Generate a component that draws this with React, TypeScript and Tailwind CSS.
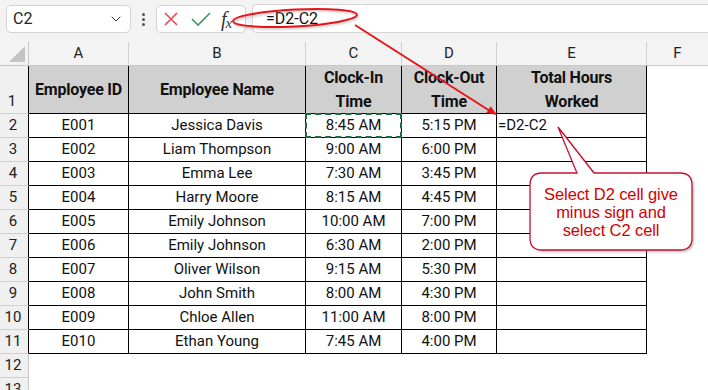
import { ChevronDown } from "lucide-react";

const rows: string[][] = [
  ["E001", "Jessica Davis", "8:45 AM", "5:15 PM"],
  ["E002", "Liam Thompson", "9:00 AM", "6:00 PM"],
  ["E003", "Emma Lee", "7:30 AM", "3:45 PM"],
  ["E004", "Harry Moore", "8:15 AM", "4:45 PM"],
  ["E005", "Emily Johnson", "10:00 AM", "7:00 PM"],
  ["E006", "Emily Johnson", "6:30 AM", "2:00 PM"],
  ["E007", "Oliver Wilson", "9:15 AM", "5:30 PM"],
  ["E008", "John Smith", "8:00 AM", "4:30 PM"],
  ["E009", "Chloe Allen", "11:00 AM", "8:00 PM"],
  ["E010", "Ethan Young", "7:45 AM", "4:00 PM"],
];

const cols = ["A", "B", "C", "D", "E", "F"];
const widths = ["w-[100px]", "w-[177px]", "w-[96px]", "w-[95px]", "w-[150px]", "flex-1"];
const headers: string[][] = [
  ["Employee ID"],
  ["Employee Name"],
  ["Clock-In", "Time"],
  ["Clock-Out", "Time"],
  ["Total Hours", "Worked"],
];

export default function App() {
  return (
    <div className="relative w-[708px] h-[390px] overflow-hidden bg-white font-['Roboto',sans-serif] text-[#111]">
      {/* Toolbar */}
      <div className="h-[41px] bg-[#f3f3f3] flex items-start pt-[5px] pl-[6px]">
        <div className="w-[125px] h-[28px] rounded-[5px] border border-[#d4d4d4] bg-white flex items-center justify-between pl-[6px] pr-[6px]">
          <span className="text-[16px] text-[#222]">C2</span>
          <ChevronDown size={16} strokeWidth={1.5} className="text-[#333]" />
        </div>
        <div className="ml-[11px] mt-[8px] flex flex-col gap-[2px]">
          <div className="w-[3px] h-[3px] rounded-full bg-[#555]" />
          <div className="w-[3px] h-[3px] rounded-full bg-[#555]" />
          <div className="w-[3px] h-[3px] rounded-full bg-[#555]" />
        </div>
        <div className="ml-[11px] w-[90px] h-[28px] rounded-[5px] border border-[#d4d4d4] bg-white flex items-center pl-[6px]">
          <svg width="16" height="16" viewBox="0 0 16 16">
            <path d="M2 2 L14 14 M14 2 L2 14" stroke="#e5484d" strokeWidth="1.6" fill="none" />
          </svg>
          <svg width="22" height="16" viewBox="0 0 22 16" className="ml-[11px]">
            <path d="M2 8 L8 14 L20 2" stroke="#3d9a5f" strokeWidth="1.6" fill="none" />
          </svg>
          <span className="ml-[9px] font-['Liberation_Serif',serif] italic text-[20px] leading-none text-[#333]">
            f<span className="text-[15px] relative top-[2px] -ml-[1px]">x</span>
          </span>
        </div>
        <div className="ml-[6px] flex-1 h-[29px] -mt-[1px] rounded-l-[5px] border border-r-0 border-[#d4d4d4] bg-white flex items-center pl-[13px]">
          <span className="text-[16px] text-[#111]">=D2-C2</span>
        </div>
      </div>

      {/* Column headers */}
      <div className="flex h-[25px] bg-[#f3f3f3] border-b border-[#c8c8c8]">
        <div className="w-[29px] border-r border-[#c8c8c8] flex items-end justify-end pr-[3px] pb-[3px]">
          <svg width="16" height="16" viewBox="0 0 16 16">
            <polygon points="16,0 16,16 0,16" fill="#c4c4c4" />
          </svg>
        </div>
        {cols.map((c, i) => (
          <div
            key={c}
            className={`${widths[i]} ${i < 5 ? "border-r border-[#d0d0d0]" : ""} flex items-center justify-center text-[15px] text-[#222] mt-[1px]`}
          >
            {c}
          </div>
        ))}
      </div>

      {/* Row 1 header */}
      <div className="flex h-[48px]">
        <div className="w-[29px] bg-[#f0f0f0] border-r border-b border-r-black border-b-[#d0d0d0] flex items-end justify-center pb-[1px] pr-[4px] text-[15px] text-[#222]">
          1
        </div>
        {headers.map((h, i) => (
          <div
            key={i}
            className={`${widths[i]} bg-[#d0d0d0] border-r border-b border-black flex flex-col items-center justify-center text-center font-bold text-[16px] leading-[24px] whitespace-nowrap tracking-[-0.2px]`}
          >
            {h.map((l) => (
              <span key={l}>{l}</span>
            ))}
          </div>
        ))}
        <div className="flex-1" />
      </div>

      {/* Data rows */}
      {rows.map((r, ri) => (
        <div key={ri} className="flex h-[24px]">
          <div className="w-[29px] bg-[#f0f0f0] border-r border-b border-r-black border-b-[#d0d0d0] flex items-center justify-center pr-[2px] text-[15px] text-[#222]">
            {ri + 2}
          </div>
          <div className="w-[100px] border-r border-b border-black flex items-center justify-center text-[15px]">{r[0]}</div>
          <div className="w-[177px] border-r border-b border-black flex items-center justify-center text-[15px]">{r[1]}</div>
          <div className="relative w-[96px] border-r border-b border-black flex items-center justify-center text-[15px]">
            {r[2]}
            {ri === 0 && (
              <div className="absolute -left-[1px] -top-[1px] w-[97px] h-[25px] border-2 border-dashed border-[#1e6b40]" />
            )}
          </div>
          <div className="w-[95px] border-r border-b border-black flex items-center justify-center text-[15px]">{r[3]}</div>
          <div className="w-[150px] border-r border-b border-black flex items-center pl-[1px] text-[15px]">
            {ri === 0 ? "=D2-C2" : ""}
          </div>
          <div className="flex-1" />
        </div>
      ))}

      {/* Empty rows */}
      {[12, 13].map((n) => (
        <div key={n} className="flex h-[24px]">
          <div className="w-[29px] bg-[#f0f0f0] border-r border-b border-[#c8c8c8] border-b-[#d0d0d0] flex items-center justify-center pr-[2px] text-[15px] text-[#222]">
            {n}
          </div>
          <div className="flex-1" />
        </div>
      ))}

      {/* Annotations overlay */}
      <svg className="absolute left-0 top-0 pointer-events-none" width="708" height="390" viewBox="0 0 708 390">
        <defs>
          <filter id="sh" x="-10%" y="-10%" width="130%" height="130%">
            <feGaussianBlur stdDeviation="1.2" />
          </filter>
        </defs>
        <ellipse cx="296" cy="19.5" rx="62" ry="8.5" transform="rotate(-3 296 19.5)" fill="none" stroke="#888" strokeWidth="2" opacity="0.5" filter="url(#sh)" />
        <ellipse cx="295" cy="18" rx="62" ry="8.5" transform="rotate(-3 295 18)" fill="none" stroke="#e8141b" strokeWidth="2" />
        <line x1="355" y1="25" x2="490" y2="111" stroke="#e8141b" strokeWidth="2" />
        <polygon points="497,115 486.4,113 490.7,106.2" fill="#e8141b" />
        <path
          d="M 544 175 L 579 175 L 560 129 L 596 175 L 682 175 Q 694 175 694 187 L 694 240 Q 694 252 682 252 L 544 252 Q 532 252 532 240 L 532 187 Q 532 175 544 175 Z"
          fill="#999"
          opacity="0.6"
          filter="url(#sh)"
        />
        <path
          d="M 542 173 L 577 173 L 558 127 L 594 173 L 680 173 Q 692 173 692 185 L 692 238 Q 692 250 680 250 L 542 250 Q 530 250 530 238 L 530 185 Q 530 173 542 173 Z"
          fill="white"
          stroke="#c8102e"
          strokeWidth="1.3"
        />
      </svg>
      <div className="absolute left-[530px] top-[174px] w-[162px] h-[76px] flex items-center justify-center text-center font-['Liberation_Sans',sans-serif] text-[16.5px] leading-[18px] tracking-[-0.1px] text-[#d40000] whitespace-nowrap">
        Select D2 cell give
        <br />
        minus sign and
        <br />
        select C2 cell
      </div>
    </div>
  );
}
